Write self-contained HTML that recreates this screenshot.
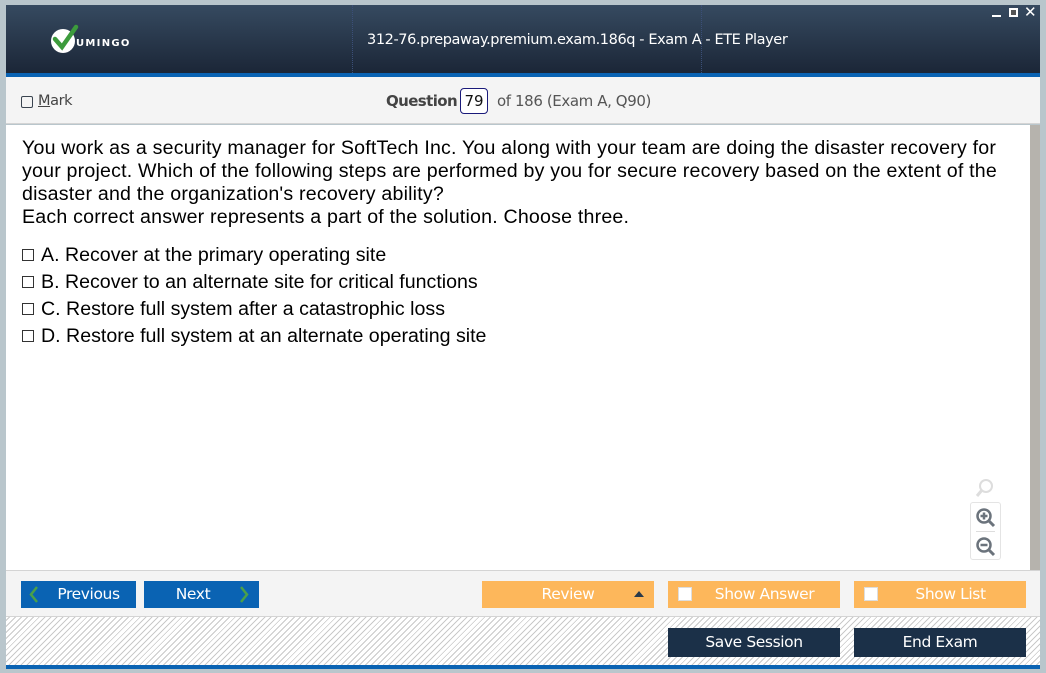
<!DOCTYPE html><html><head><style>
*{margin:0;padding:0;box-sizing:border-box}
body{width:1046px;height:673px;background:#b9c6cc;position:relative;overflow:hidden;font-family:"Liberation Sans",sans-serif}
.abs{position:absolute}
.hdr{left:6px;top:5px;width:1034px;height:68px;background:linear-gradient(#364a60,#1b2637)}
.blue{left:6px;top:73px;width:1034px;height:4px;background:#0a63b3}
.tb{left:6px;top:77px;width:1034px;height:47px;background:#f4f4f4;border-bottom:1px solid #d4d4d4}
.content{left:6px;top:125px;width:1024px;height:445px;background:#fff}
.scroll{left:1030px;top:125px;width:10px;height:445px;background:#b6b3ad}
.bb{left:6px;top:570px;width:1034px;height:47px;background:#f4f4f4;border-top:1px solid #d4d4d4;border-bottom:1px solid #d4d4d4}
.hatch{left:6px;top:617px;width:1034px;height:48px;background:repeating-linear-gradient(135deg,#fff 0 2px,#c9c9c9 2px 3px,#fff 3px 4.2px)}
.bot{left:6px;top:665px;width:1034px;height:4px;background:#0a63b3}
.btn{position:absolute;color:#fff;font-family:"DejaVu Sans",sans-serif;font-size:15.5px;text-align:center;line-height:27px;height:27px;letter-spacing:-0.4px}
.q{font-size:19.6px;color:#000;line-height:23px;letter-spacing:0.2px}
.opt{position:absolute;left:22px;font-size:19.6px;color:#000}
.cb{display:inline-block;width:12px;height:12px;border:1px solid #333;vertical-align:0px;margin-right:7px}
.wcb{position:absolute;width:14px;height:14px;background:#fff;border:1px solid #ddd;top:7px}
</style></head><body>
<div class="abs hdr"></div>
<div class="abs" style="left:352px;top:5px;width:1px;height:68px;border-left:1px dotted #3b4f78"></div>
<div class="abs" style="left:701px;top:5px;width:1px;height:68px;border-left:1px dotted #3b4f78"></div>
<svg class="abs" style="left:50px;top:24px" width="30" height="30" viewBox="0 0 30 30"><circle cx="13" cy="17" r="12" fill="#fff"/><path d="M5 15 L12 23 L26 3" stroke="#3c9b3c" stroke-width="4.5" fill="none" stroke-linecap="round"/></svg>
<div class="abs" style="left:76px;top:38px;color:#fff;font:bold 10px 'DejaVu Sans',sans-serif;letter-spacing:1.3px">UMINGO</div>
<div class="abs" style="left:367px;top:32px;color:#fff;font:14.5px 'DejaVu Sans',sans-serif;letter-spacing:-0.4px">312-76.prepaway.premium.exam.186q - Exam A - ETE Player</div>
<div class="abs" style="left:992px;top:15px;width:9px;height:2px;background:#fff"></div>
<div class="abs" style="left:1009px;top:8px;width:9px;height:9px;border:2px solid #fff;background:#555"></div>
<div class="abs" style="left:1024px;top:3px;color:#fff;font:bold 15px 'DejaVu Sans',sans-serif">✕</div>
<div class="abs blue"></div>
<div class="abs tb"></div>
<div class="abs" style="left:21px;top:96px;width:12px;height:12px;border:1px solid #3a4450;border-radius:2px"></div>
<div class="abs" style="left:38px;top:93px;font:14.5px 'DejaVu Sans',sans-serif;color:#444;letter-spacing:-0.4px"><u>M</u>ark</div>
<div class="abs" style="left:386px;top:92px;font:15px 'DejaVu Sans',sans-serif;color:#444;letter-spacing:-0.6px"><b>Question</b></div>
<div class="abs" style="left:460px;top:88px;width:28px;height:26px;border:1px solid #1a1a7a;border-radius:4px;background:#fff;font:15px 'DejaVu Sans',sans-serif;text-align:center;line-height:24px;color:#111">79</div>
<div class="abs" style="left:497px;top:92px;font:15px 'DejaVu Sans',sans-serif;color:#555;letter-spacing:-0.4px">of 186 (Exam A, Q90)</div>
<div class="abs content"></div>
<div class="abs scroll"></div>
<div class="abs q" style="left:22px;top:137px;width:1004px">You work as a security manager for SoftTech Inc. You along with your team are doing the disaster recovery for your project. Which of the following steps are performed by you for secure recovery based on the extent of the disaster and the organization's recovery ability?<br>Each correct answer represents a part of the solution. Choose three.</div>
<div class="opt" style="top:244px"><span class="cb"></span>A.&nbsp;Recover at the primary operating site</div>
<div class="opt" style="top:271px"><span class="cb"></span>B.&nbsp;Recover to an alternate site for critical functions</div>
<div class="opt" style="top:298px"><span class="cb"></span>C.&nbsp;Restore full system after a catastrophic loss</div>
<div class="opt" style="top:325px"><span class="cb"></span>D.&nbsp;Restore full system at an alternate operating site</div>
<svg class="abs" style="left:974px;top:477px" width="22" height="22"><circle cx="12" cy="9" r="6" fill="none" stroke="#ddd" stroke-width="2"/><path d="M8 13 L3 19" stroke="#ddd" stroke-width="3"/></svg>
<div class="abs" style="left:970px;top:502px;width:31px;height:58px;border:1px solid #e4e4e4;border-radius:3px;background:#fff"></div>
<div class="abs" style="left:976px;top:531px;width:19px;height:1px;background:#ddd"></div>
<svg class="abs" style="left:975px;top:507px" width="22" height="22"><circle cx="9" cy="9" r="6.5" fill="none" stroke="#6b737c" stroke-width="2.5"/><path d="M13 13 L19 19" stroke="#6b737c" stroke-width="3"/><path d="M5.5 9h7M9 5.5v7" stroke="#6b737c" stroke-width="2.5"/></svg>
<svg class="abs" style="left:975px;top:536px" width="22" height="22"><circle cx="9" cy="9" r="6.5" fill="none" stroke="#6b737c" stroke-width="2.5"/><path d="M13 13 L19 19" stroke="#6b737c" stroke-width="3"/><path d="M5.5 9h7" stroke="#6b737c" stroke-width="2.5"/></svg>
<div class="abs bb"></div>
<div class="btn" style="left:21px;top:581px;width:115px;background:#0a63b3;padding-left:20px">Previous</div>
<svg class="abs" style="left:28px;top:585px" width="12" height="19"><path d="M9 2 L3 9.5 L9 17" stroke="#4aa04a" stroke-width="2.5" fill="none"/></svg>
<div class="btn" style="left:144px;top:581px;width:115px;background:#0a63b3;padding-right:17px">Next</div>
<svg class="abs" style="left:238px;top:585px" width="12" height="19"><path d="M3 2 L9 9.5 L3 17" stroke="#4aa04a" stroke-width="2.5" fill="none"/></svg>
<div class="btn" style="left:482px;top:581px;width:172px;background:#fdb75b">Review</div>
<div class="abs" style="left:634px;top:591px;width:0;height:0;border-left:5px solid transparent;border-right:5px solid transparent;border-bottom:6px solid #2a3a4a"></div>
<div class="btn" style="left:668px;top:581px;width:172px;background:#fdb75b;padding-left:21px">Show Answer</div>
<div class="wcb" style="left:678px;top:587px"></div>
<div class="btn" style="left:854px;top:581px;width:172px;background:#fdb75b;padding-left:21px">Show List</div>
<div class="wcb" style="left:864px;top:587px"></div>
<div class="abs hatch"></div>
<div class="btn" style="left:668px;top:628px;width:172px;height:29px;line-height:29px;background:#1b3048">Save Session</div>
<div class="btn" style="left:854px;top:628px;width:172px;height:29px;line-height:29px;background:#1b3048">End Exam</div>
<div class="abs bot"></div>
</body></html>
